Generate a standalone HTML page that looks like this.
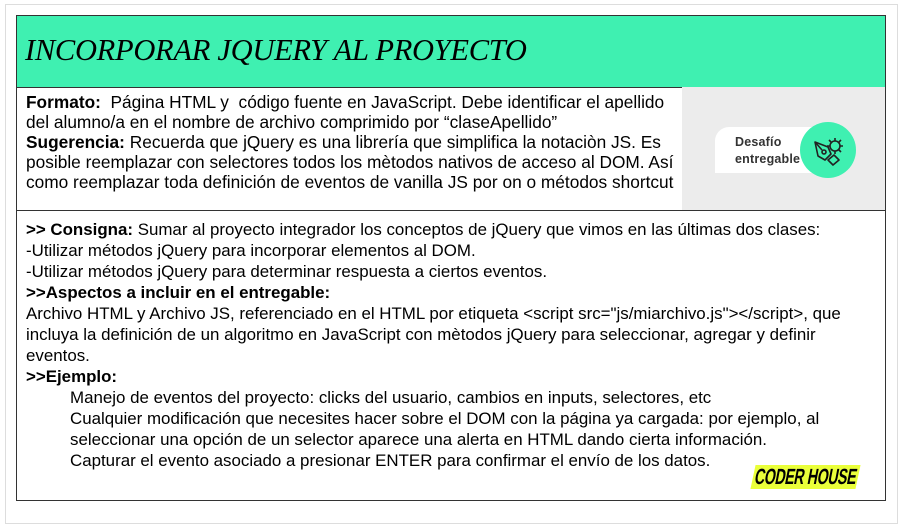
<!DOCTYPE html>
<html><head><meta charset="utf-8"><style>
*{margin:0;padding:0;box-sizing:border-box}
body{width:903px;height:508px;background:#fff;position:relative;overflow:hidden;font-family:"Liberation Sans",Arial,sans-serif;color:#000}
.pg{position:absolute;left:5px;top:4px;width:893px;height:520px;border:1px solid #ddd;background:#fff}
.title{position:absolute;left:16px;top:15px;width:870px;height:73px;background:#3ff0b1;border:1px solid #333}
.title span{position:absolute;left:8px;top:17px;font-family:"Liberation Serif",serif;font-style:italic;font-size:30.5px;letter-spacing:-0.3px}
.r2{position:absolute;left:16px;top:87px;width:667px;height:124px;border:1px solid #333;border-top:none;padding:5px 0 0 9px;font-size:17.3px;line-height:20px;white-space:nowrap}
.r2r{position:absolute;left:682px;top:87px;width:204px;height:124px;background:#ececec;border-right:1px solid #333;border-bottom:1px solid #333}
.r3{position:absolute;left:16px;top:210px;width:870px;height:291px;border:1px solid #333;border-top:none;padding:9px 0 0 9px;font-size:16.9px;line-height:21px;white-space:nowrap}
.ind{padding-left:44px}
.pill{position:absolute;left:33px;top:40px;width:100px;height:46px;background:#fff;border-radius:14px 0 0 0;font-size:12.5px;line-height:17px;color:#333;padding:7px 0 0 20px;font-weight:bold;letter-spacing:0.2px}
.circ{position:absolute;left:118px;top:35px;width:56px;height:56px;border-radius:50%;background:#3ff0b1}
.logo{position:absolute;left:753px;top:465px;width:105px;height:24px;background:#eaff3a;transform:skewX(-12deg)}
.logo span{position:absolute;left:-24px;right:-16px;top:0;white-space:nowrap;font-weight:bold;font-size:22px;letter-spacing:-0.5px;line-height:24px;transform:scaleX(0.64) skewX(2deg);text-align:center}
</style></head><body>
<div class="pg"></div>
<div class="title"><span>INCORPORAR JQUERY AL PROYECTO</span></div>
<div class="r2"><b>Formato:</b>&nbsp; Página HTML y&nbsp; código fuente en JavaScript. Debe identificar el apellido<br>del alumno/a en el nombre de archivo comprimido por “claseApellido”<br><b>Sugerencia:</b> Recuerda que jQuery es una librería que simplifica la notaciòn JS. Es<br>posible reemplazar con selectores todos los mètodos nativos de acceso al DOM. Así<br>como reemplazar toda definición de eventos de vanilla JS por on o métodos shortcut</div>
<div class="r2r">
<div class="pill">Desafío<br>entregable</div>
<div class="circ"><svg width="56" height="56" viewBox="0 0 56 56" fill="none" stroke="#222" stroke-width="1.6" stroke-linejoin="round"><path d="M15 20 L28 25 L31 32 L25 38 L18 34 Z"/><circle cx="24" cy="30" r="2"/><path d="M15 20 L22 28"/><path d="M28 38 L34 33 L39 38 L33 43 Z"/><circle cx="35" cy="24" r="5"/><path d="M35 16v3M35 29v3M27 24h3M40 24h3M29 18l2 2M39 28l2 2M41 18l-2 2"/></svg></div>
</div>
<div class="r3"><b>&gt;&gt; Consigna:</b> Sumar al proyecto integrador los conceptos de jQuery que vimos en las últimas dos clases:<br>-Utilizar métodos jQuery para incorporar elementos al DOM.<br>-Utilizar métodos jQuery para determinar respuesta a ciertos eventos.<br><b>&gt;&gt;Aspectos a incluir en el entregable:</b><br>Archivo HTML y Archivo JS, referenciado en el HTML por etiqueta &lt;script src="js/miarchivo.js"&gt;&lt;/script&gt;, que<br>incluya la definición de un algoritmo en JavaScript con mètodos jQuery para seleccionar, agregar y definir<br>eventos.<br><b>&gt;&gt;Ejemplo:</b><br><div class="ind">Manejo de eventos del proyecto: clicks del usuario, cambios en inputs, selectores, etc<br>Cualquier modificación que necesites hacer sobre el DOM con la página ya cargada: por ejemplo, al<br>seleccionar una opción de un selector aparece una alerta en HTML dando cierta información.<br>Capturar el evento asociado a presionar ENTER para confirmar el envío de los datos.</div></div>
<div class="logo"><span>CODER HOUSE</span></div>
</body></html>
